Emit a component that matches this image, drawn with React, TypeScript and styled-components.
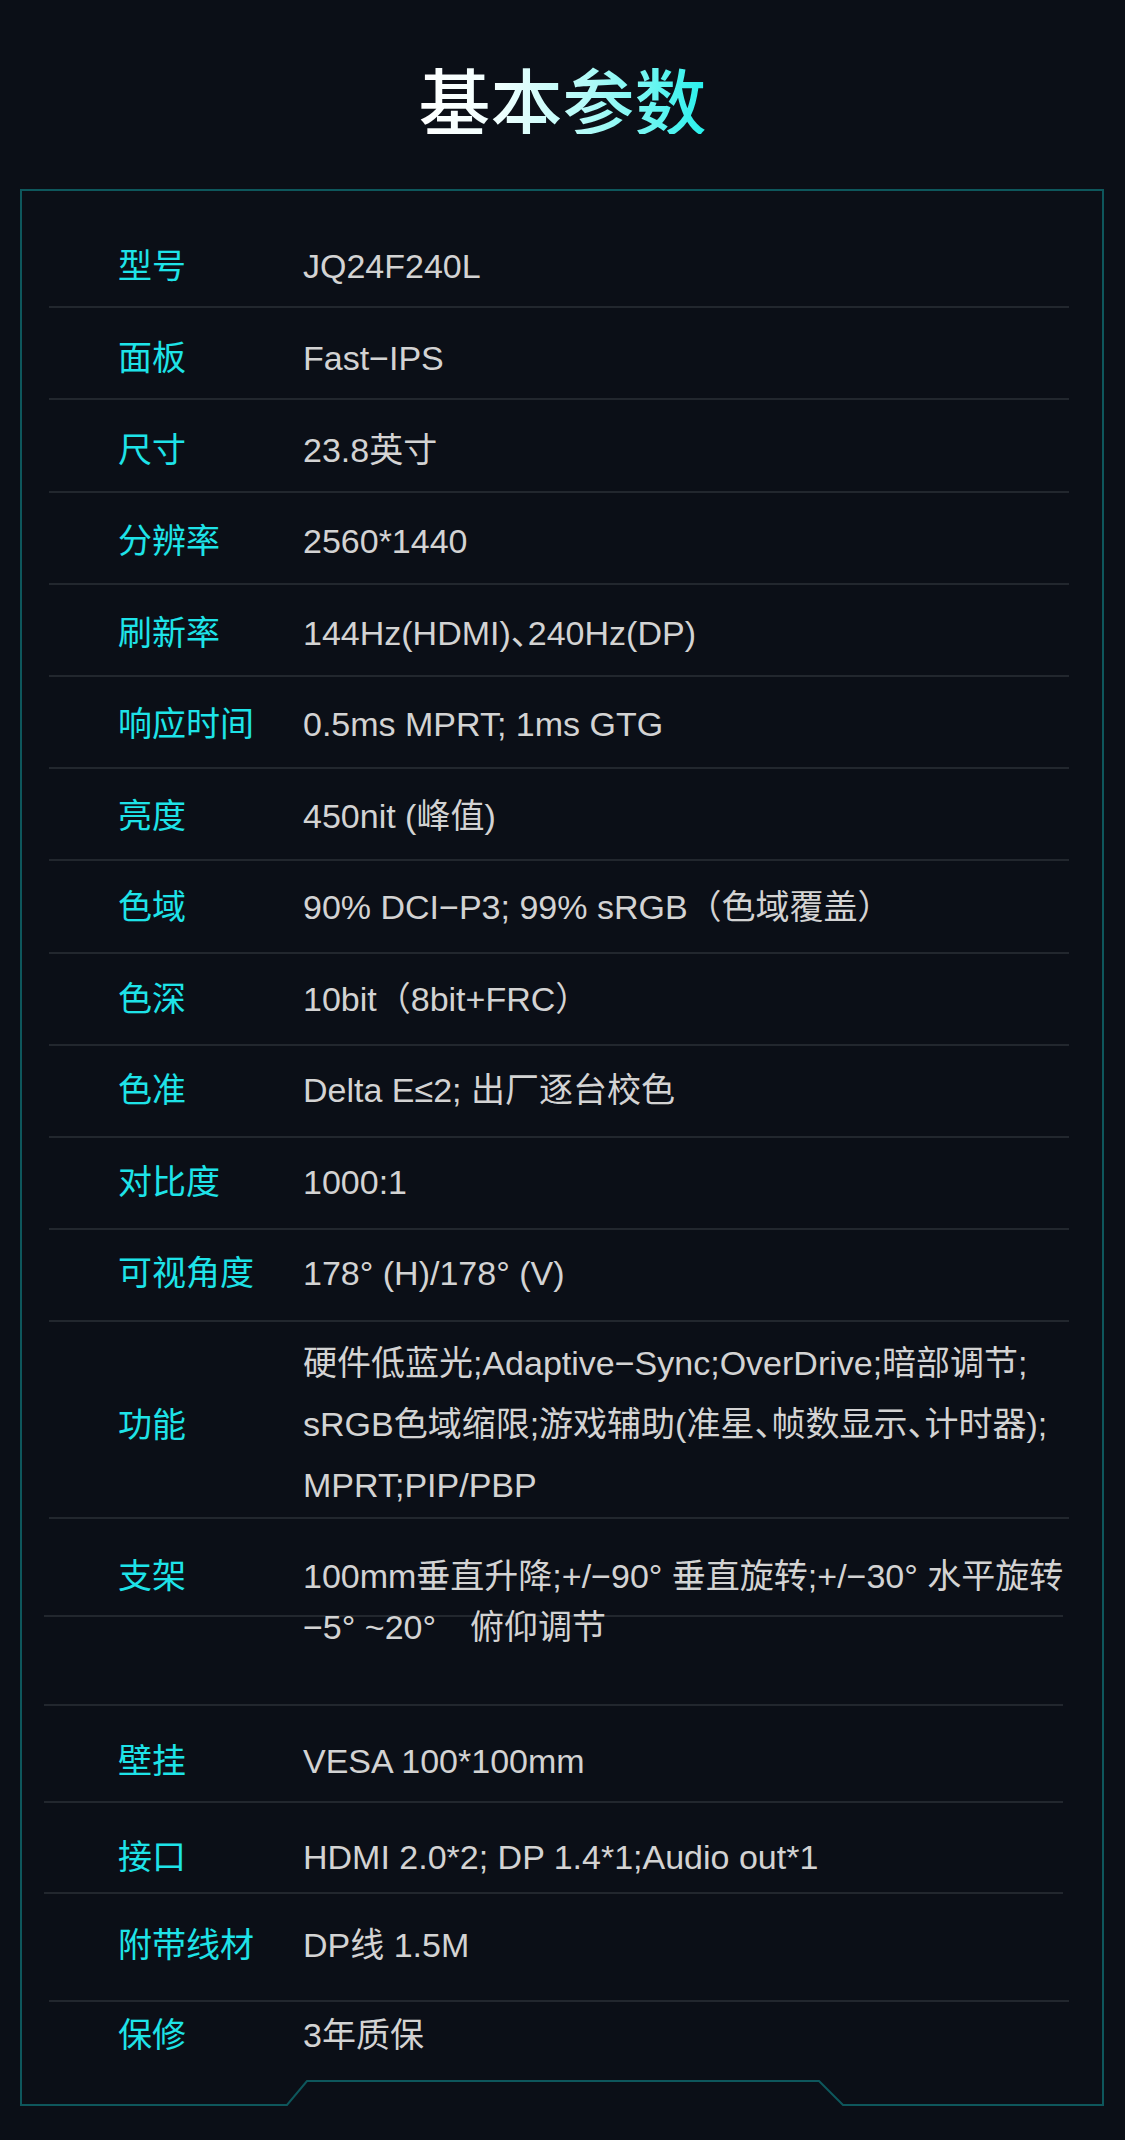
import React from 'react';
import styled, { createGlobalStyle } from 'styled-components';

const GlobalStyle = createGlobalStyle`
  html, body {
    margin: 0;
    padding: 0;
    background: #0b0f17;
  }
  body {
    font-family: 'Liberation Sans', 'Noto Sans CJK SC', sans-serif;
  }
`;

interface ISpec {
  label: string;
  lines: string[];
  h?: number;
  shift?: number;
  lh?: number;
  inset?: boolean;
  divider?: boolean;
  top?: boolean;
  compact?: boolean;
}

const ROW_H = 92.2;

const SPECS: ISpec[] = [
  { label: '型号', lines: ['JQ24F240L'] },
  { label: '面板', lines: ['Fast−IPS'], shift: 5 },
  { label: '尺寸', lines: ['23.8英寸'], shift: 4.3 },
  { label: '分辨率', lines: ['2560*1440'], shift: 3.6 },
  { label: '刷新率', lines: ['144Hz(HDMI)、240Hz(DP)'], shift: 2.9, compact: true },
  { label: '响应时间', lines: ['0.5ms MPRT; 1ms GTG'], shift: 2.2 },
  { label: '亮度', lines: ['450nit (峰值)'], shift: 1.5 },
  { label: '色域', lines: ['90% DCI−P3; 99% sRGB（色域覆盖）'], shift: 0.8 },
  { label: '色深', lines: ['10bit（8bit+FRC）'], shift: 0.1 },
  { label: '色准', lines: ['Delta E≤2; 出厂逐台校色'], shift: -0.6 },
  { label: '对比度', lines: ['1000:1'], shift: -1.3 },
  { label: '可视角度', lines: ['178° (H)/178° (V)'], shift: -2 },
  {
    label: '功能',
    lines: [
      '硬件低蓝光;Adaptive−Sync;OverDrive;暗部调节;',
      'sRGB色域缩限;游戏辅助(准星、帧数显示、计时器);',
      'MPRT;PIP/PBP',
    ],
    h: 197,
    lh: 61,
    compact: true,
  },
  {
    label: '支架',
    lines: ['100mm垂直升降;+/−90° 垂直旋转;+/−30° 水平旋转', '−5° ~20°　俯仰调节'],
    h: 98,
    shift: 16,
    lh: 51,
    inset: true,
    top: true,
  },
  { label: '', lines: [], h: 89, shift: 0, inset: true },
  { label: '壁挂', lines: ['VESA 100*100mm'], h: 97, shift: 7, inset: true },
  { label: '接口', lines: ['HDMI 2.0*2; DP 1.4*1;Audio out*1'], h: 91, shift: 9.5, inset: true },
  { label: '附带线材', lines: ['DP线 1.5M'], h: 108, shift: -2 },
  { label: '保修', lines: ['3年质保'], h: 66, shift: 0, divider: false },
];

const Page = styled.div`
  min-height: 2140px;
  box-sizing: border-box;
  padding: 62px 0 34px;
  background: #0b0f17;
`;

const Header = styled.div`
  display: flex;
  justify-content: center;
`;

const Title = styled.h1`
  margin: 0;
  font-family: 'Noto Sans CJK SC', sans-serif;
  font-size: 72px;
  font-weight: 500;
  line-height: 72px;
  background: linear-gradient(90deg, #ffffff 0%, #f0fffe 28%, #b4fbf8 58%, #6ef6f2 80%, #25f0ec 100%);
  -webkit-background-clip: text;
  background-clip: text;
  color: transparent;
`;

const Panel = styled.section`
  position: relative;
  margin: 55px 21px 0 20px;
  padding: 25px 0 38px;
  border: 2px solid #0e575c;
  border-bottom: none;
`;

const BottomEdge = styled.svg`
  position: absolute;
  left: -2px;
  bottom: 0;
  width: 1084px;
  height: 30px;
  display: block;
`;

interface ISpecRowProps {
  $h: number;
  $shift: number;
  $inset: boolean;
  $divider: boolean;
  $top: boolean;
}

const SpecRow = styled.div<ISpecRowProps>`
  box-sizing: border-box;
  display: flex;
  align-items: ${(p) => (p.$top ? 'flex-start' : 'center')};
  height: ${(p) => p.$h}px;
  margin: 0 ${(p) => (p.$inset ? 39 : 33)}px 0 ${(p) => (p.$inset ? 22 : 27)}px;
  padding-left: ${(p) => (p.$inset ? 74 : 69)}px;
  padding-top: ${(p) => Math.max(0, p.$shift * 2)}px;
  padding-bottom: ${(p) => Math.max(0, -p.$shift * 2)}px;
  border-bottom: ${(p) => (p.$divider ? '2px solid #22272e' : 'none')};
`;

const SpecLabel = styled.div<{ $lh: number }>`
  flex: 0 0 185px;
  font-size: 34px;
  line-height: ${(p) => p.$lh}px;
  color: #1ee3e8;
  white-space: nowrap;
`;

const SpecValue = styled.div<{ $lh: number; $compact: boolean }>`
  flex: 1;
  font-size: 34px;
  line-height: ${(p) => p.$lh}px;
  color: #d3d3d3;
  font-feature-settings: ${(p) => (p.$compact ? '"halt"' : 'normal')};
`;

const ValueLine = styled.div`
  white-space: nowrap;
`;

export default function App() {
  return (
    <Page>
      <GlobalStyle />
      <Header>
        <Title>基本参数</Title>
      </Header>
      <Panel>
        {SPECS.map((spec, inx) => {
          const lh = spec.lh ?? 50;
          return (
            <SpecRow
              key={inx}
              $h={spec.h ?? ROW_H}
              $shift={spec.shift ?? 5}
              $inset={!!spec.inset}
              $divider={spec.divider !== false}
              $top={!!spec.top}
            >
              <SpecLabel $lh={spec.top ? lh : 50}>{spec.label}</SpecLabel>
              <SpecValue $lh={lh} $compact={!!spec.compact}>
                {spec.lines.map((line) => (
                  <ValueLine key={line}>{line}</ValueLine>
                ))}
              </SpecValue>
            </SpecRow>
          );
        })}
        <BottomEdge viewBox="0 0 1084 30" fill="none">
          <path d="M0 29 H267 L287 5 H799 L823 29 H1084" stroke="#0e575c" strokeWidth="2" />
        </BottomEdge>
      </Panel>
    </Page>
  );
}
